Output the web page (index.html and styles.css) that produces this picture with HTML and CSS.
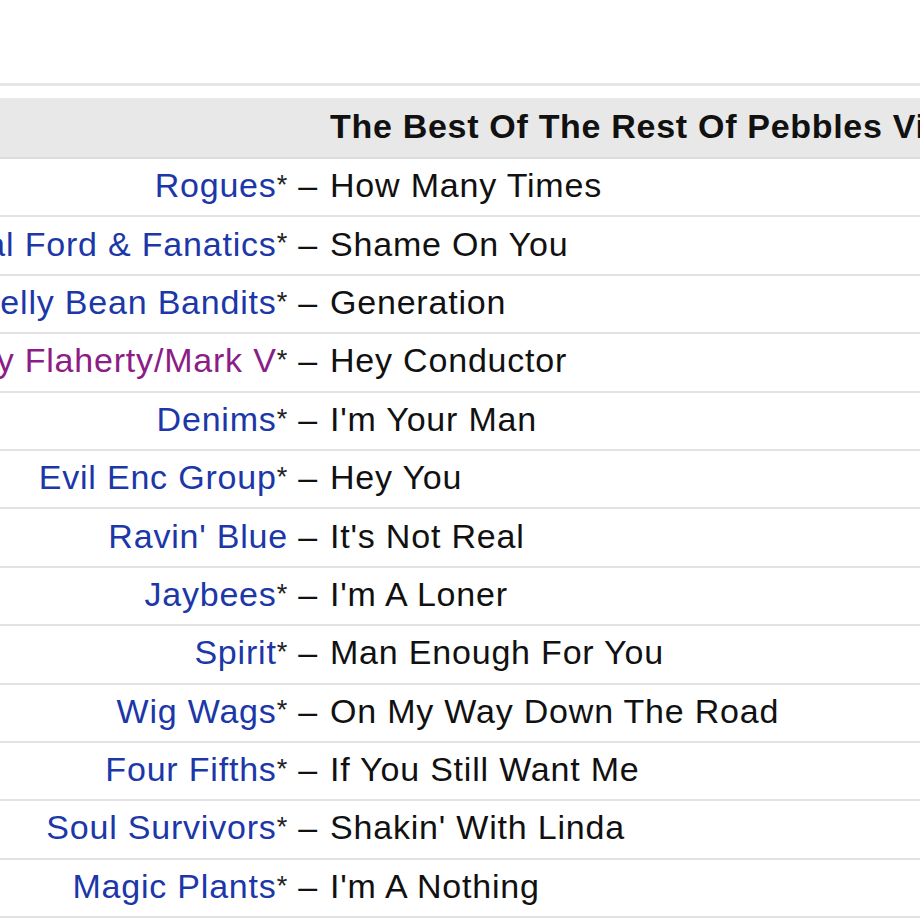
FILE: index.html
```html
<!DOCTYPE html>
<html>
<head>
<meta charset="utf-8">
<link rel="stylesheet" href="styles.css">
</head>
<body>
<div class="page">
  <div class="topline"></div>
  <div class="tracklist">
    <div class="row heading">
      <div class="artist"></div>
      <div class="title">The Best Of The Rest Of Pebbles Vi</div>
    </div>
    <div class="row"><div class="artist"><a class="link">Rogues</a><span class="ast">*</span>&nbsp;–</div><div class="title">How Many Times</div></div>
    <div class="row"><div class="artist"><a class="link">Neal Ford &amp; Fanatics</a><span class="ast">*</span>&nbsp;–</div><div class="title">Shame On You</div></div>
    <div class="row"><div class="artist"><a class="link">Jelly Bean Bandits</a><span class="ast">*</span>&nbsp;–</div><div class="title">Generation</div></div>
    <div class="row"><div class="artist"><a class="link visited">Larry Flaherty/Mark V</a><span class="ast">*</span>&nbsp;–</div><div class="title">Hey Conductor</div></div>
    <div class="row"><div class="artist"><a class="link">Denims</a><span class="ast">*</span>&nbsp;–</div><div class="title">I'm Your Man</div></div>
    <div class="row"><div class="artist"><a class="link">Evil Enc Group</a><span class="ast">*</span>&nbsp;–</div><div class="title">Hey You</div></div>
    <div class="row"><div class="artist"><a class="link">Ravin' Blue</a>&nbsp;–</div><div class="title">It's Not Real</div></div>
    <div class="row"><div class="artist"><a class="link">Jaybees</a><span class="ast">*</span>&nbsp;–</div><div class="title">I'm A Loner</div></div>
    <div class="row"><div class="artist"><a class="link">Spirit</a><span class="ast">*</span>&nbsp;–</div><div class="title">Man Enough For You</div></div>
    <div class="row"><div class="artist"><a class="link">Wig Wags</a><span class="ast">*</span>&nbsp;–</div><div class="title">On My Way Down The Road</div></div>
    <div class="row"><div class="artist"><a class="link">Four Fifths</a><span class="ast">*</span>&nbsp;–</div><div class="title">If You Still Want Me</div></div>
    <div class="row"><div class="artist"><a class="link">Soul Survivors</a><span class="ast">*</span>&nbsp;–</div><div class="title">Shakin' With Linda</div></div>
    <div class="row"><div class="artist"><a class="link">Magic Plants</a><span class="ast">*</span>&nbsp;–</div><div class="title">I'm A Nothing</div></div>
  </div>
</div>
</body>
</html>
```
FILE: styles.css
```css
html, body {
  margin: 0;
  padding: 0;
  background: #fff;
  overflow: hidden;
}
.page {
  width: 920px;
  height: 920px;
  padding-top: 83px;
  box-sizing: border-box;
  font-family: "Liberation Sans", Arial, sans-serif;
  font-size: 34px;
  letter-spacing: 0.8px;
  color: #111;
}
.topline {
  height: 3px;
  background: #e6e6e6;
  margin-bottom: 12px;
}
.tracklist {
  display: flex;
  flex-direction: column;
}
.row {
  display: grid;
  grid-template-columns: 318px 1fr;
  column-gap: 12px;
  height: 58.4px;
  box-sizing: border-box;
  border-bottom: 2px solid #e2e2e2;
  align-items: center;
  white-space: nowrap;
  padding-bottom: 3px;
}
.row.heading {
  background: #e8e8e8;
  border-bottom: 2px solid #dcdcdc;
  font-weight: bold;
  letter-spacing: 0.7px;
  height: 61px;
  padding-bottom: 2px;
}
.artist {
  display: flex;
  justify-content: flex-end;
  align-items: baseline;
  overflow: visible;
}
.title {
  overflow: hidden;
}
.link {
  color: #1c37a8;
  text-decoration: none;
}
.link.visited {
  color: #8c1c86;
}
.ast {
  color: #222;
  font-size: 0.8em;
  position: relative;
  top: -0.12em;
}
```
